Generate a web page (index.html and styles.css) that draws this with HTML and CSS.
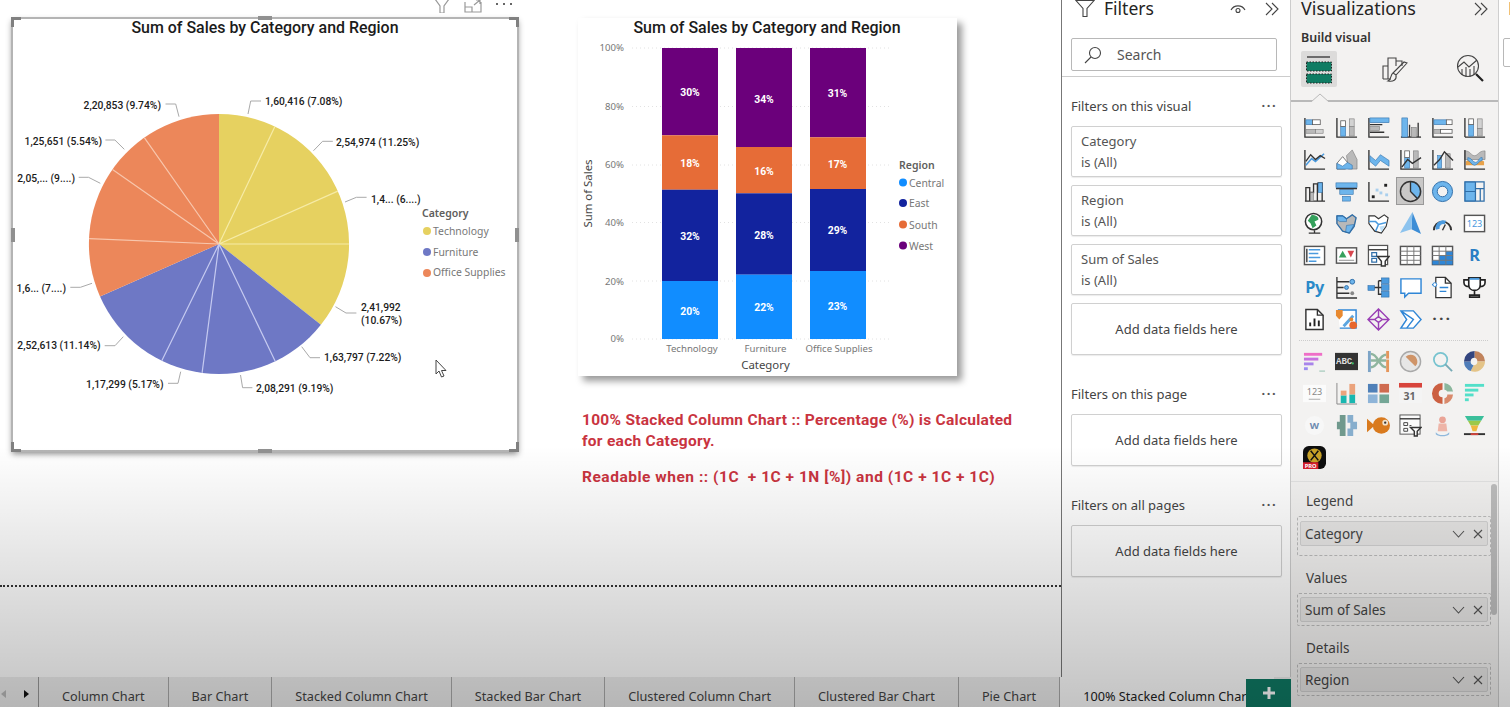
FILE: index.html
```html
<!DOCTYPE html>
<html lang="en">
<head>
  <meta charset="UTF-8" />
  <title>100% Stacked Column Chart</title>
  <link rel="stylesheet" href="styles.css">
</head>
<body>

<div class="report">
  <div class="workspace">
    <main class="canvas">
      <div class="page">
        <section class="visual visual-pie">
          <div class="visual-tools">
            <svg width="18" height="14" viewBox="0 0 18 14"><path class="tool" d="M2 0h14l-5 7v7H7V7z"/></svg>
            <svg width="18" height="14" viewBox="0 0 18 14"><path class="tool" d="M1 3v10h16V3M1 8h7v5M10 6l6-5M12 1h4v4"/></svg>
            <svg width="18" height="14" viewBox="0 0 18 14"><path fill="#666" d="M1 4h2v2H1zM8 4h2v2H8zM15 4h2v2h-2z"/></svg>
          </div>
          <span class="handle corner tl"></span><span class="handle corner tr"></span>
          <span class="handle corner bl"></span><span class="handle corner br"></span>
          <span class="handle mid top"></span><span class="handle mid bottom"></span>
          <span class="handle mid left"></span><span class="handle mid right"></span>

          <svg class="chart" width="506" height="433" viewBox="12 18 506 433">
            <text class="chart-title" x="265" y="33" text-anchor="middle">Sum of Sales by Category and Region</text>

            <path fill="#e6d160" d="M219 244L219 114A130 130 0 0 1 320.9 324.8Z"/>
            <path fill="#6e78c5" d="M219 244L320.9 324.8A130 130 0 0 1 100 296.5Z"/>
            <path fill="#ec875a" d="M219 244L100 296.5A130 130 0 0 1 219 114Z"/>
            <g stroke="#f6eba6" stroke-width="1.2">
              <path d="M219 244L274.9 126.6M219 244L337.8 191.1M219 244H349"/>
            </g>
            <g stroke="#c5caf0" stroke-width="1.2">
              <path d="M219 244L275.2 361.2M219 244L202.1 372.9M219 244L161.8 360.7"/>
            </g>
            <g stroke="#f8c6ac" stroke-width="1.2">
              <path d="M219 244L89.1 238.6M219 244L112.5 169.4M219 244L144.3 137.6"/>
            </g>

            <g class="leader">
              <path d="M248 114L250.7 101H261"/>
              <path d="M313.5 150.7L322.6 141.3H332.8"/>
              <path d="M345 202L356.4 197.3H366.6"/>
              <path d="M335.5 306.7L346 313H356.4"/>
              <path d="M301.7 346.7L310 357.7H320"/>
              <path d="M240.5 375L242.6 387.7H252.4"/>
              <path d="M180.7 371.7L178 383.3H168"/>
              <path d="M123.3 336.7L115 345.7H104.7"/>
              <path d="M92 283.3L80.4 287.3H70.3"/>
              <path d="M100.3 183.3L88.5 177.3H78.7"/>
              <path d="M124.3 149.3L114.9 140H105.4"/>
              <path d="M179 116.7L175.7 104H165.5"/>
            </g>

            <g class="pie-label">
              <text x="265" y="105">1,60,416 (7.08%)</text>
              <text x="336" y="146">2,54,974 (11.25%)</text>
              <text x="371" y="203">1,4... (6....)</text>
              <text x="361" y="311">2,41,992</text>
              <text x="361" y="324">(10.67%)</text>
              <text x="324" y="361">1,63,797 (7.22%)</text>
              <text x="256" y="392">2,08,291 (9.19%)</text>
              <text x="163.5" y="388" text-anchor="end">1,17,299 (5.17%)</text>
              <text x="100.6" y="349" text-anchor="end">2,52,613 (11.14%)</text>
              <text x="66" y="292" text-anchor="end">1,6... (7....)</text>
              <text x="75" y="182" text-anchor="end">2,05,... (9....)</text>
              <text x="102" y="145" text-anchor="end">1,25,651 (5.54%)</text>
              <text x="161" y="109" text-anchor="end">2,20,853 (9.74%)</text>
            </g>

            <text class="legend-title" x="422" y="217">Category</text>
            <circle cx="427" cy="231" r="4" fill="#e6d160"/>
            <circle cx="427" cy="252" r="4" fill="#6e78c5"/>
            <circle cx="427" cy="273" r="4" fill="#ec875a"/>
            <g class="legend-text">
              <text x="433" y="235">Technology</text>
              <text x="433" y="256">Furniture</text>
              <text x="433" y="276">Office Supplies</text>
            </g>

            <path class="cursor" d="M436 360V374L439 371L441.5 377L444 376L441.5 370.500H446Z"/>
          </svg>
        </section>

        <div class="side">
          <section class="visual visual-stack">
            <svg class="chart" width="379" height="358" viewBox="578 18 379 358">
              <text class="chart-title" x="767" y="33" text-anchor="middle">Sum of Sales by Category and Region</text>

              <g class="grid-line">
                <path d="M632 48H890M632 106.500H890M632 165H890M632 222.500H890M632 281H892M632 339H890"/>
              </g>
              <g class="axis-text" text-anchor="end">
                <text x="624" y="51">100%</text>
                <text x="624" y="110">80%</text>
                <text x="624" y="168">60%</text>
                <text x="624" y="226">40%</text>
                <text x="624" y="285">20%</text>
                <text x="624" y="342">0%</text>
              </g>
              <text class="axis-title" transform="translate(592 193.500) rotate(-90)" text-anchor="middle">Sum of Sales</text>

              <rect fill="#6b007b" x="662" y="48" width="56" height="87.300"/>
              <rect fill="#e66c37" x="662" y="135.300" width="56" height="54.400"/>
              <rect fill="#12239e" x="662" y="189.700" width="56" height="91.300"/>
              <rect fill="#118dff" x="662" y="281" width="56" height="58"/>

              <rect fill="#6b007b" x="736" y="48" width="56" height="99"/>
              <rect fill="#e66c37" x="736" y="147" width="56" height="46.300"/>
              <rect fill="#12239e" x="736" y="193.300" width="56" height="81.400"/>
              <rect fill="#118dff" x="736" y="274.700" width="56" height="64.300"/>

              <rect fill="#6b007b" x="810" y="48" width="56" height="89.300"/>
              <rect fill="#e66c37" x="810" y="137.300" width="56" height="51.700"/>
              <rect fill="#12239e" x="810" y="189" width="56" height="82"/>
              <rect fill="#118dff" x="810" y="271" width="56" height="68"/>

              <g class="bar-text" text-anchor="middle">
                <text x="690" y="96">30%</text>
                <text x="690" y="167">18%</text>
                <text x="690" y="240">32%</text>
                <text x="690" y="315">20%</text>
                <text x="764" y="103">34%</text>
                <text x="764" y="175">16%</text>
                <text x="764" y="239">28%</text>
                <text x="764" y="311">22%</text>
                <text x="837.500" y="97">31%</text>
                <text x="837.500" y="168">17%</text>
                <text x="837.500" y="234">29%</text>
                <text x="837.500" y="310">23%</text>
              </g>

              <g class="axis-text" text-anchor="middle">
                <text x="692" y="352">Technology</text>
                <text x="765.500" y="352">Furniture</text>
                <text x="839" y="352">Office Supplies</text>
              </g>
              <text class="axis-title" x="765.500" y="369" text-anchor="middle">Category</text>

              <text class="legend-title" x="899" y="169">Region</text>
              <circle cx="903" cy="182.500" r="4" fill="#118dff"/>
              <circle cx="903" cy="203" r="4" fill="#12239e"/>
              <circle cx="903" cy="224.500" r="4" fill="#e66c37"/>
              <circle cx="903" cy="245.500" r="4" fill="#6b007b"/>
              <g class="legend-text">
                <text x="909" y="186.500">Central</text>
                <text x="909" y="207">East</text>
                <text x="909" y="228.500">South</text>
                <text x="909" y="250">West</text>
              </g>
            </svg>
          </section>

          <p class="note">100% Stacked Column Chart :: Percentage (%) is Calculated<br>for each Category.</p>
          <p class="note note-second">Readable when :: (1C &nbsp;+ 1C + 1N [%]) and (1C + 1C + 1C)</p>
        </div>
      </div>
    </main>

    <aside class="filters">
      <div class="panel-head">
        <svg width="20" height="17" viewBox="0 0 20 17"><path class="thin" d="M1 0.500H19L12 8.500V16.500H8V8.500Z"/></svg>
        <h2>Filters</h2>
        <svg class="eye" width="16" height="12" viewBox="0 0 16 12"><path class="thin" d="M1 7C4 1.500 12 1.500 15 7M3.500 9.500"/><circle class="thin" cx="8" cy="7.500" r="2"/></svg>
        <svg width="14" height="14" viewBox="0 0 14 14"><path class="thin" d="M1 1L7 7L1 13M7 1L13 7L7 13"/></svg>
      </div>
      <div class="search-wrap">
        <div class="search">
          <svg width="18" height="18" viewBox="0 0 18 18"><circle class="thin" cx="11" cy="7" r="5.500"/><path class="thin" d="M7 11L1 17"/></svg>
          <span>Search</span>
        </div>
      </div>

      <div class="filter-label first"><span>Filters on this visual</span><b>&middot;&middot;&middot;</b></div>
      <div class="filter-card">Category<br>is (All)</div>
      <div class="filter-card">Region<br>is (All)</div>
      <div class="filter-card">Sum of Sales<br>is (All)</div>
      <div class="filter-card add">Add data fields here</div>

      <div class="filter-label"><span>Filters on this page</span><b>&middot;&middot;&middot;</b></div>
      <div class="filter-card add">Add data fields here</div>

      <div class="filter-label"><span>Filters on all pages</span><b>&middot;&middot;&middot;</b></div>
      <div class="filter-card add">Add data fields here</div>
    </aside>
  </div>

  <nav class="tabs">
    <div class="tab-arrows">
      <svg width="6" height="8" viewBox="0 0 6 8"><path fill="#bbb" d="M6 0V8L1 4Z"/></svg>
      <svg width="6" height="8" viewBox="0 0 6 8"><path fill="#111" d="M0 0V8L5 4Z"/></svg>
    </div>
    <a class="tab">Column Chart</a>
    <a class="tab">Bar Chart</a>
    <a class="tab">Stacked Column Chart</a>
    <a class="tab">Stacked Bar Chart</a>
    <a class="tab">Clustered Column Chart</a>
    <a class="tab">Clustered Bar Chart</a>
    <a class="tab">Pie Chart</a>
    <a class="tab active">100% Stacked Column Chart</a>
    <a class="tab-add">
      <svg width="12" height="12" viewBox="0 0 12 12"><path fill="#fff" d="M4.500 0H7.500V4.500H12V7.500H7.500V12H4.500V7.500H0V4.500H4.500Z"/></svg>
    </a>
  </nav>
</div>

<aside class="viz">
  <div class="panel-head">
    <h2>Visualizations</h2>
    <svg width="14" height="14" viewBox="0 0 14 14"><path class="thin" d="M1 1L7 7L1 13M7 1L13 7L7 13"/></svg>
  </div>
  <div class="build-title">Build visual</div>
  <div class="build-tabs">
    <div class="build-tab selected">
      <svg width="30" height="30" viewBox="0 0 30 30">
        <path stroke="#222" stroke-width="1.2" d="M3 3H26"/>
        <rect x="2.500" y="8" width="25" height="9" fill="#107c63" stroke="#222" stroke-dasharray="1.500 1.500"/>
        <rect x="2.500" y="20" width="25" height="9" fill="#107c63" stroke="#222" stroke-dasharray="1.500 1.500"/>
      </svg>
    </div>
    <div class="build-tab">
      <svg width="28" height="30" viewBox="0 0 28 30">
        <path class="thin" d="M2 25V12H7V25M7 16V4H15V12M15 7H21V12M2 25H10"/>
        <path class="thin" d="M26 9L15 21L12 19L23 8ZM12 19C9 21 11 25 7 27C12 28 16 26 15 21"/>
      </svg>
    </div>
    <div class="build-tab">
      <svg width="30" height="30" viewBox="0 0 30 30">
        <circle class="thin" cx="13" cy="12" r="10.500"/>
        <path class="thin" d="M3 13L9 8L14 13L22 6M7 21V15M11 23V13M15 23V15M19 21V12"/>
        <path stroke="#222" stroke-width="2.200" d="M21 20L28 27"/>
      </svg>
    </div>
  </div>

  <div class="build-divider"><svg width="20" height="9" viewBox="0 0 20 9"><path fill="#f3f2f1" stroke="#b9b9b9" d="M1 9L10 1L19 9"/></svg></div>

  <div class="viz-grid">
    <svg viewBox="0 0 24 24"><path class="k" d="M2 2V22H23"/><rect class="b" x="3" y="4" width="7" height="5"/><rect class="w" x="10" y="4" width="8" height="5"/><rect class="g" x="3" y="14" width="10" height="4"/><rect class="g2" x="13" y="14" width="8" height="4"/></svg>
    <svg viewBox="0 0 24 24"><path class="k" d="M2 2V22H23"/><rect class="b" x="6" y="11" width="5" height="10"/><rect class="w" x="6" y="5" width="5" height="6"/><rect class="g" x="15" y="11" width="5" height="10"/><rect class="g2" x="15" y="3" width="5" height="8"/></svg>
    <svg viewBox="0 0 24 24"><path class="k" d="M2 2V22H23"/><rect class="b" x="3" y="2" width="20" height="5"/><rect class="g" x="3" y="11" width="10" height="4"/><path class="k" d="M3 9H16M3 17H18"/></svg>
    <svg viewBox="0 0 24 24"><path class="k" d="M2 22H23"/><rect class="b" x="3" y="2" width="6" height="20"/><rect class="g" x="13" y="12" width="5" height="10"/><path class="k" d="M11 9V22M20 7V22"/></svg>
    <svg viewBox="0 0 24 24"><path class="k" d="M2 2V22H23"/><rect class="b" x="3" y="4" width="13" height="5"/><rect class="w" x="16" y="4" width="6" height="5"/><rect class="g" x="3" y="14" width="7" height="4"/><rect class="w" x="10" y="14" width="12" height="4"/></svg>
    <svg viewBox="0 0 24 24"><path class="k" d="M2 22H23M2 2V22"/><rect class="b" x="6" y="9" width="5" height="12"/><rect class="w" x="6" y="3" width="5" height="6"/><rect class="g" x="15" y="13" width="5" height="8"/><rect class="g2" x="15" y="3" width="5" height="10"/></svg>

    <svg viewBox="0 0 24 24"><path class="k" d="M2 2V22H23"/><path class="bs" d="M3 18L9 11L13 14L22 6"/><path class="k" d="M3 14L8 7L13 12L18 8L23 11"/></svg>
    <svg viewBox="0 0 24 24"><path class="g" d="M12 8L18 2L23 12V22H14Z"/><path class="w" d="M8 9L13 15L11 22H2V16Z"/><path class="b" d="M2 22V16L8 19L13 15L18 18V22Z"/></svg>
    <svg viewBox="0 0 24 24"><path class="k" d="M2 2V22H23"/><path class="b" d="M3 8L9 13L14 7L23 13V19L14 13L9 19L3 14Z"/></svg>
    <svg viewBox="0 0 24 24"><path class="k" d="M2 2V22H23"/><rect class="b" x="6" y="10" width="5" height="11"/><rect class="w" x="6" y="3" width="5" height="7"/><rect class="g" x="15" y="3" width="5" height="18"/><path class="k" d="M3 20L9 12L14 16L23 10"/></svg>
    <svg viewBox="0 0 24 24"><path class="k" d="M2 2V22H23"/><rect class="b" x="7" y="8" width="4" height="13"/><rect class="g" x="15" y="6" width="5" height="15"/><path class="k" d="M3 18L9 12L14 4L23 13"/></svg>
    <svg viewBox="0 0 24 24"><path class="g" d="M2 3C8 3 8 8 12 8S16 3 23 3V12H2Z"/><path class="or" d="M3 14C8 10 10 17 13 17S17 11 22 14V18H3Z"/><path class="b" d="M5 10C9 10 10 15 13 15S17 9 20 10V13C17 13 15 18 12 18S7 13 5 13Z"/><path class="k" d="M2 2V22H23"/></svg>

    <svg viewBox="0 0 24 24"><path class="k" d="M2 22H23M3 22V8H7V22M7 13H11V4H15V22M15 3H20V22"/><rect class="b" x="16" y="3" width="4" height="10"/><rect class="g" x="8" y="13" width="3" height="9"/></svg>
    <svg viewBox="0 0 24 24"><rect class="b" x="1" y="3" width="22" height="5"/><rect class="b" x="5" y="10" width="14" height="5"/><rect class="b" x="8" y="17" width="8" height="5"/><path class="k" d="M1 9H23"/></svg>
    <svg viewBox="0 0 24 24"><path class="k" d="M2 2V22H23"/><rect x="18" y="4" width="3" height="3" fill="#222"/><rect class="b2" x="9" y="9" width="3" height="3"/><rect class="b2" x="13" y="12" width="3" height="3"/><rect class="b2" x="19" y="14" width="3" height="3"/><rect x="5" y="16" width="3" height="3" fill="#222"/></svg>
    <div class="viz-selected"><svg viewBox="0 0 24 24"><path class="b" d="M12 1.500A10.500 10.500 0 0 1 19 20L12 12Z"/><circle class="ring" cx="12" cy="12" r="10.500"/><path class="k" d="M12 1.500V12L19.500 19.500"/></svg></div>
    <svg viewBox="0 0 24 24"><circle cx="12" cy="12" r="8" fill="none" stroke="#6db5ec" stroke-width="5"/><circle cx="12" cy="12" r="10.500" class="ring2"/><circle cx="12" cy="12" r="5.500" class="ring2"/></svg>
    <svg viewBox="0 0 24 24"><rect class="b" x="2" y="2" width="11" height="20"/><path class="kb" d="M2 2H22V22H2ZM13 2V22M2 12H13M13 9H22M18 9V22"/></svg>

    <svg viewBox="0 0 24 24"><circle cx="11" cy="10" r="8.500" fill="#fff" stroke="#333" stroke-width="1.600"/><path d="M9 3C13 3 17 5 16 8L12 10L14 14L10 17L8 12L5 9Z" fill="#35a05c"/><path class="k" d="M6 22H18M12 19V22"/></svg>
    <svg viewBox="0 0 24 24"><path class="g" d="M2 4H8L12 7L18 3L22 6L20 15L15 22L8 20L2 12Z"/><path class="b" d="M2 4H8L12 7V10H5L2 8ZM12 14L20 13L15 22L11 21Z"/><path class="kb" d="M2 4H8L12 7L18 3L22 6L20 15L15 22L8 20L2 12Z"/></svg>
    <svg viewBox="0 0 24 24"><path fill="#fff" stroke="#333" stroke-width="1.200" d="M2 4H8L12 7L18 3L22 6L20 15L15 22L8 20L2 12Z"/><path class="bs" d="M2 10H9L12 13L20 11M9 20L12 13"/><path fill="#bfe0f7" d="M13 15L19 14L15 21Z"/></svg>
    <svg viewBox="0 0 24 24"><path fill="#3c8dd6" d="M14 0L23 23L13 18Z"/><path fill="#8cc3ee" d="M14 0L13 18L1 22Z"/></svg>
    <svg viewBox="0 0 24 24"><path fill="none" stroke="#333" stroke-width="2" d="M3 19A9 9 0 0 1 21 19"/><path fill="none" stroke="#4a9ade" stroke-width="4" d="M7 18A6 6 0 0 1 15 11"/><path class="k" d="M12 19L15 13"/></svg>
    <svg viewBox="0 0 24 24"><rect x="1.500" y="3.500" width="21" height="17" fill="#fff" stroke="#555" stroke-width="1.500"/><text class="icon-card" x="12" y="16" text-anchor="middle">123</text></svg>

    <svg viewBox="0 0 24 24"><rect x="1.500" y="2.500" width="21" height="19" fill="#fff" stroke="#555" stroke-width="1.500"/><path d="M6 6H18M6 10H16M6 14H18M6 18H14" stroke="#4a9ade" stroke-width="1.600"/><path class="k" d="M4 5V19"/></svg>
    <svg viewBox="0 0 24 24"><rect x="1.500" y="4" width="21" height="16" fill="#fff" stroke="#555" stroke-width="1.500"/><path fill="#36a05c" d="M8 7L12 14H4Z"/><path fill="#d8474f" d="M13 7H20L16.500 14Z"/><path stroke="#8c8c8c" d="M4 17H20"/></svg>
    <svg viewBox="0 0 24 24"><rect x="1.500" y="1.500" width="20" height="20" fill="#fff" stroke="#555" stroke-width="1.300"/><path class="k" d="M1.500 6H21.500"/><path class="kb" d="M5 9H10V13H5ZM5 15H10V19H5Z"/><path fill="#fff" stroke="#333" stroke-width="1.500" d="M11 13H23L19 18V23H15V18Z"/></svg>
    <svg viewBox="0 0 24 24"><rect x="1.500" y="2.500" width="21" height="19" fill="#fff" stroke="#555" stroke-width="1.500"/><path d="M1.500 7.500H22.500M1.500 12H22.500M1.500 17H22.500M8.500 2.500V21.500M15.500 2.500V21.500" stroke="#777"/></svg>
    <svg viewBox="0 0 24 24"><rect x="1.500" y="2.500" width="21" height="19" fill="#fff" stroke="#555" stroke-width="1.500"/><rect x="8.500" y="12" width="14" height="9.500" fill="#2f86d6"/><rect x="1.500" y="17" width="7" height="4.500" fill="#2f86d6"/><rect x="15.500" y="7.500" width="7" height="4.500" fill="#2f86d6"/><path d="M1.500 7.500H22.500M1.500 12H22.500M1.500 17H22.500M8.500 2.500V21.500M15.500 2.500V21.500" stroke="#777"/></svg>
    <svg viewBox="0 0 24 24"><text class="icon-r" x="12" y="18" text-anchor="middle">R</text></svg>

    <svg viewBox="0 0 24 24"><text class="icon-py" x="12" y="18" text-anchor="middle">Py</text></svg>
    <svg viewBox="0 0 24 24"><path class="k" d="M2 1V23H23M2 6H15M2 12H9M2 18H15"/><circle class="node" cx="18" cy="6" r="2.500"/><circle class="node" cx="12" cy="12" r="2"/><circle class="node2" cx="18" cy="18" r="2"/></svg>
    <svg viewBox="0 0 24 24"><rect class="b3" x="1" y="10" width="7" height="5"/><rect class="b3" x="15" y="2" width="8" height="6"/><rect class="b3" x="15" y="9" width="8" height="6"/><rect class="b3" x="15" y="16" width="8" height="6"/><path class="k" d="M8 12H15M12 5V19H15M12 5H15"/></svg>
    <svg viewBox="0 0 24 24"><path fill="#fff" stroke="#2f86d6" stroke-width="1.500" d="M2 3H23V18H10L6 22V18H2Z"/></svg>
    <svg viewBox="0 0 24 24"><path fill="#fff" stroke="#333" stroke-width="1.300" d="M5 1.500H15L21 7.500V22.500H5Z"/><path class="k" d="M15 1.500V7.500H21"/><path stroke="#2f86d6" stroke-width="1.400" d="M9 12H18M1 9H6M9 16H16"/><circle cx="4" cy="9" r="2" fill="#fff" stroke="#2f86d6"/></svg>
    <svg viewBox="0 0 24 24"><path fill="#fff" stroke="#222" stroke-width="1.700" d="M6 2H18V9C18 13 15 15 12 15S6 13 6 9ZM6 4H1V7C1 10 4 11 6 11M18 4H23V7C23 10 20 11 18 11M12 15V19M7 22H17V20H7Z"/><path fill="#4a9ade" d="M7 2H17V4H7Z"/></svg>

    <svg viewBox="0 0 24 24"><path fill="#fff" stroke="#333" stroke-width="1.500" d="M3 1.500H15L21 7.500V22.500H3Z"/><path class="k" d="M15 1.500V7.500H21"/><path stroke="#222" stroke-width="2" d="M7.500 19V15M12 19V11M16.500 19V13"/></svg>
    <svg viewBox="0 0 24 24"><path fill="#fff" stroke="#2f86d6" stroke-width="1.500" d="M3 2H22V21H5"/><path stroke="#5ba5e0" stroke-width="3" d="M9 19L19 8"/><path fill="#e8892f" d="M1 2H8V8L4.500 12L1 8Z"/><circle cx="19" cy="18" r="4" fill="#e8662c"/><circle cx="17" cy="12" r="2" fill="#e8892f"/></svg>
    <svg viewBox="0 0 24 24"><path fill="none" stroke="#9a3fb5" stroke-width="1.500" d="M12 1L23 12L12 23L1 12ZM12 1V9L8 12L12 15V23M12 9L16 12L12 15M1 12H8M16 12H23"/></svg>
    <svg viewBox="0 0 24 24"><path fill="#fff" stroke="#2f86d6" stroke-width="1.500" d="M2 3H15L23 12L15 21H2L8 12ZM2 3L15 12L8 21"/></svg>
    <div class="viz-more">&middot;&middot;&middot;</div>
  </div>

  <div class="viz-sep"></div>

  <div class="viz-grid custom">
    <svg viewBox="0 0 24 24"><path d="M1 3H20V6H1Z" fill="#ef6fc7"/><path d="M1 8H16V11H1Z" fill="#c772e0"/><path d="M1 13H11V16H1Z" fill="#a884ea"/><path d="M1 18H5V21H1Z" fill="#9c8cf0"/><path d="M17 22H23" stroke="#8fbfae"/></svg>
    <svg viewBox="0 0 24 24"><rect y="3" width="24" height="18" fill="#333"/><text class="icon-abc" x="1" y="15">ABC</text><circle cx="18.500" cy="14" r="1.200" fill="#36c06c"/></svg>
    <svg viewBox="0 0 24 24"><rect x="1" y="1" width="3" height="22" fill="#7da4c7"/><rect x="20" y="1" width="3" height="8" fill="#e5965c"/><rect x="20" y="10" width="3" height="13" fill="#e5965c"/><path d="M4 4C12 4 12 18 20 18M4 18C12 18 12 5 20 5M4 11H20" fill="none" stroke="#8fb59e" stroke-width="2.500"/></svg>
    <svg viewBox="0 0 24 24"><circle cx="12" cy="12" r="10.500" fill="#e6e6e6" stroke="#a9a9a9" stroke-width="1.500"/><path d="M12 5A7 7 0 0 1 17 17L7 7A7 7 0 0 1 12 5Z" fill="#cf9468"/></svg>
    <svg viewBox="0 0 24 24"><circle cx="10" cy="10" r="7" fill="none" stroke="#77c3cf" stroke-width="1.800"/><path d="M15 15L22 22" stroke="#77aab5" stroke-width="2"/></svg>
    <svg viewBox="0 0 24 24"><path d="M12 1A11 11 0 0 1 23 12H15A4 4 0 0 0 12 8Z" fill="#c1835c"/><path d="M23 12A11 11 0 0 1 8 22L11 16A4 4 0 0 0 15 12Z" fill="#e4c488"/><path d="M8 22A11 11 0 0 1 1 12H8A4 4 0 0 0 11 16Z" fill="#4f7db9"/><path d="M1 12A11 11 0 0 1 12 1V8A4 4 0 0 0 8 12Z" fill="#33457f"/></svg>

    <svg viewBox="0 0 24 24"><rect y="3" width="24" height="18" fill="#fbfbfb"/><text class="icon-soft" x="12" y="14" text-anchor="middle">123</text><path d="M6 18H18" stroke="#aaa"/></svg>
    <svg viewBox="0 0 24 24"><path d="M2 1V23H23" fill="none" stroke="#888"/><rect x="6" y="14" width="6" height="8" fill="#19b7b0"/><rect x="6" y="9" width="6" height="5" fill="#eba37c"/><rect x="15" y="13" width="6" height="9" fill="#19b7b0"/><rect x="15" y="2" width="6" height="11" fill="#eba37c"/></svg>
    <svg viewBox="0 0 24 24"><rect x="1" y="2" width="10" height="9" fill="#4f80b8"/><rect x="13" y="2" width="10" height="9" fill="#cf6b50"/><rect x="1" y="13" width="10" height="9" fill="#8eb4d8"/><rect x="13" y="13" width="10" height="9" fill="#74a696"/></svg>
    <svg viewBox="0 0 24 24"><rect y="1" width="24" height="5" fill="#d8443c"/><rect y="6" width="24" height="16" fill="#f4f4f4"/><text class="icon-cal" x="11" y="19" text-anchor="middle">31</text></svg>
    <svg viewBox="0 0 24 24"><path d="M12 1A11 11 0 0 0 12 23V16A4 4 0 0 1 12 8Z" fill="#cc6042"/><path d="M14 1A11 11 0 0 1 23 10H17A4 4 0 0 0 14 8Z" fill="#8bb79d"/><path d="M23 13A11 11 0 0 1 14 23V17A4 4 0 0 0 17 13Z" fill="#d98a6c"/></svg>
    <svg viewBox="0 0 24 24"><rect x="2" y="2" width="20" height="3" fill="#53dfc9"/><rect x="2" y="7" width="14" height="3" fill="#53dfc9"/><rect x="2" y="12" width="9" height="3" fill="#53dfc9"/><rect x="2" y="17" width="4" height="3" fill="#53dfc9"/></svg>

    <svg viewBox="0 0 24 24"><circle cx="12" cy="12" r="10" fill="#f7f7f7"/><text class="icon-w" x="12" y="16" text-anchor="middle">W</text></svg>
    <svg viewBox="0 0 24 24"><path d="M5 1H11V23H5V16H2V8H5Z" fill="#70998d"/><path d="M13 1H19V8H23V16H19V23H13V15H16V9H13Z" fill="#87aecd"/></svg>
    <svg viewBox="0 0 24 24"><ellipse cx="15" cy="12" rx="9" ry="8.500" fill="#d97a1e"/><path d="M8 12L0 5V19Z" fill="#d97a1e"/><circle cx="19" cy="9" r="3" fill="#f2e2cc"/><circle cx="19" cy="9" r="1.200" fill="#333"/></svg>
    <svg viewBox="0 0 24 24"><rect x="1" y="1" width="21" height="20" fill="#fafafa" stroke="#555"/><path class="k" d="M1 5H22"/><path d="M5 9H9V12H5ZM5 15H9V18H5ZM11 12H13" fill="none" stroke="#444"/><path fill="#fff" stroke="#333" stroke-width="1.500" d="M12 14H23L19 18V23H16V18Z"/></svg>
    <svg viewBox="0 0 24 24"><circle cx="12" cy="6" r="3.500" fill="#eaa497"/><path d="M8 10H16L17 18H7Z" fill="#eeb5a8"/><path d="M5 19C8 23 16 23 19 19V21C16 24 8 24 5 21Z" fill="#8fb8dc"/></svg>
    <svg viewBox="0 0 24 24"><path d="M2 2H22L19 7H5Z" fill="#3bbf9b"/><path d="M5 7H19L16 12H8Z" fill="#9cc94a"/><path d="M8 12H16L14 18H10Z" fill="#efb73e"/><path d="M1 21H23" stroke="#333" stroke-width="2"/><path d="M8 21H16" stroke="#d1443c" stroke-width="2"/></svg>

    <svg viewBox="0 0 24 24"><rect width="24" height="24" rx="6" fill="#0e0e0e"/><circle cx="12" cy="10" r="7.500" fill="#c9a227"/><path d="M8 5L16 15M16 5L8 15" stroke="#111" stroke-width="1.600"/><rect x="0" y="17" width="16" height="7" fill="#d81e2c"/><text class="icon-pro" x="8" y="23" text-anchor="middle">PRO</text></svg>
  </div>

  <div class="wells">
    <div class="well-label">Legend</div>
    <div class="well tall">
      <div class="chip"><span>Category</span>
        <svg width="13" height="8" viewBox="0 0 13 8"><path class="thin" d="M1 1L6.500 7L12 1"/></svg>
        <svg width="10" height="10" viewBox="0 0 10 10"><path class="thin" d="M1 1L9 9M9 1L1 9"/></svg>
      </div>
    </div>
    <div class="well-label">Values</div>
    <div class="well">
      <div class="chip"><span>Sum of Sales</span>
        <svg width="13" height="8" viewBox="0 0 13 8"><path class="thin" d="M1 1L6.500 7L12 1"/></svg>
        <svg width="10" height="10" viewBox="0 0 10 10"><path class="thin" d="M1 1L9 9M9 1L1 9"/></svg>
      </div>
    </div>
    <div class="well-label">Details</div>
    <div class="well">
      <div class="chip"><span>Region</span>
        <svg width="13" height="8" viewBox="0 0 13 8"><path class="thin" d="M1 1L6.500 7L12 1"/></svg>
        <svg width="10" height="10" viewBox="0 0 10 10"><path class="thin" d="M1 1L9 9M9 1L1 9"/></svg>
      </div>
    </div>
  </div>
  <div class="scrollbar"></div>
</aside>

<aside class="fields">
  <h2>Fields</h2>
  <div class="fields-search"></div>
</aside>

<div class="vignette"></div>

</body>
</html>
```

FILE: styles.css
```css
* { box-sizing: border-box; }
html, body { margin: 0; height: 100%; }
body {
  display: flex; width: 1510px; height: 707px; overflow: hidden;
  position: relative; background: #fff; color: #333;
  font-family: "Noto Sans", sans-serif; font-size: 13px;
}
h2 { margin: 0; font-size: 18px; font-weight: 400; line-height: 17px; color: #252423; }

/* darkening at the bottom of the video frame */
.vignette {
  position: absolute; inset: 0; pointer-events: none;
  background: linear-gradient(to bottom, rgba(0,0,0,0) 63%, rgba(0,0,0,.235) 100%);
}

.report { width: 1291px; display: flex; flex-direction: column; }
.workspace { flex: 1; display: flex; min-height: 0; }

/* canvas */
.canvas { width: 1062px; border-right: 1px solid #777; }
.page {
  height: 587px; border-bottom: 2px dotted #333;
  display: flex; gap: 60px; padding: 18px 0 0 12px;
}
.visual { position: relative; background: #fff; }
.visual-pie {
  width: 506px; height: 433px; outline: 2px solid #b4b4b4; outline-offset: -1px;
  box-shadow: 0 3px 6px rgba(0,0,0,.45);
}
.visual-stack { width: 379px; height: 358px; box-shadow: 5px 5px 7px rgba(0,0,0,.4); }
.chart { display: block; }
.side { width: 470px; }

.chart-title { font: 500 15.95px Roboto, sans-serif; fill: #1b1b1b; }
.pie-label { font: 500 10.3px Roboto, sans-serif; fill: #1c1c1c; }
.leader path { fill: none; stroke: #a9a9a9; stroke-width: 1; }
.legend-title { font: 600 10.5px "Noto Sans", sans-serif; fill: #605e5c; }
.legend-text { font: 400 10.4px "Noto Sans", sans-serif; fill: #777; }
.axis-text { font: 400 9.6px "Noto Sans", sans-serif; fill: #777; }
.axis-title { font: 400 11.4px "Noto Sans", sans-serif; fill: #444; }
.bar-text { font: 700 10.4px Roboto, sans-serif; fill: #fff; }
.grid-line path { fill: none; stroke: #e2e2e2; stroke-dasharray: 1 3; }
.cursor { fill: #fff; stroke: #444; stroke-width: 1; }

.visual-tools {
  position: absolute; top: -19px; right: 5px; height: 15px;
  display: flex; gap: 13px; align-items: flex-start;
}
.tool { fill: none; stroke: #999; stroke-width: 1.2; }

.handle { position: absolute; z-index: 1; }
.corner { width: 10px; height: 10px; border: 0 solid #808080; }
.tl { left: -1px; top: -1px; border-width: 3px 0 0 3px; }
.tr { right: -1px; top: -1px; border-width: 3px 3px 0 0; }
.bl { left: -1px; bottom: -1px; border-width: 0 0 3px 3px; }
.br { right: -1px; bottom: -1px; border-width: 0 3px 3px 0; }
.mid { background: #909090; }
.top, .bottom { width: 14px; height: 4px; left: 246px; }
.top { top: -2px; }
.bottom { bottom: -2px; }
.left, .right { width: 4px; height: 14px; top: 210px; }
.left { left: -1px; }
.right { right: -1px; }

.note {
  margin: 34px 0 0 4px; white-space: nowrap; letter-spacing: .28px;
  font: 700 15.5px/21px Roboto, sans-serif; color: #c9343f;
}
.note-second { margin-top: 15px; letter-spacing: .52px; }

/* panels shared */
.panel-head { height: 17px; display: flex; align-items: center; gap: 9px; }
.panel-head h2 { flex: 1; }
.thin { fill: none; stroke: #444; stroke-width: 1.100; }

/* filters */
.filters { width: 229px; background: #fff; border-right: 1px solid #ccc; }
.filters .panel-head { padding: 0 11px 0 13px; }
.filters h2 { font-size: 17.5px; }
.eye { margin-right: 10px; }
.search-wrap { height: 60px; padding: 21px 13px 0 9px; border-bottom: 1px solid #ccc; }
.search {
  height: 33px; border: 1px solid #b8b8b8; border-radius: 2px;
  display: flex; align-items: center; gap: 15px; padding-left: 12px;
  font-size: 14px; color: #555;
}
.filter-label {
  display: flex; justify-content: space-between; align-items: center;
  height: 18px; margin: 30px 13px 11px 9px; color: #444; font-size: 13px;
}
.filter-label.first { margin-top: 20px; }
.filter-label b { font: 700 14px Roboto, sans-serif; letter-spacing: 1px; color: #555; }
.filter-card {
  height: 51px; margin: 0 8px 8px 9px; padding: 4px 9px 0; line-height: 20.5px;
  border: 1px solid #d0d0d0; border-radius: 2px; box-shadow: 0 1px 1px rgba(0,0,0,.08);
  font-size: 13px; color: #555;
}
.filter-card.add { height: 52px; line-height: 50px; padding-top: 0; text-align: center; font-size: 13px; color: #444; }

/* page tabs */
.tabs { height: 30px; display: flex; background: #eeeeee; overflow: hidden; position: relative; }
.tab-arrows {
  width: 39px; flex: none; display: flex; align-items: center; justify-content: space-between;
  padding: 4px 8px 0 0; border-right: 1px solid #999;
}
.tab {
  flex: none; padding: 10px 23px 0; border-right: 1px solid #aaa;
  font-size: 12.7px; color: #444; white-space: nowrap;
}
.tab.active { background: #fff; color: #222; border: 0; }
.tab-add {
  position: absolute; right: 0; top: 2px; bottom: 0; width: 45px;
  background: #0f7a64; display: flex; align-items: center; justify-content: center;
}

/* visualizations */
.viz {
  width: 208px; flex: none; position: relative; background: #f3f2f1;
  border-right: 1px solid #cfcfcf;
}
.viz .panel-head { padding: 0 10px 0 10px; }
.build-title { margin: 13px 0 0 10px; height: 16px; line-height: 16px; font-weight: 600; font-size: 12.500px; color: #333; }
.build-tabs { display: flex; justify-content: space-between; margin: 5px 10px 0 10px; height: 36px; }
.build-tab { width: 36px; height: 36px; display: flex; align-items: center; justify-content: center; }
.build-tab.selected { background: #dcdbda; border-radius: 2px; }
.build-divider {
  height: 15px; border-bottom: 2px solid #b9b9b9; padding-left: 19px;
  display: flex; align-items: flex-end;
}
.build-divider svg { margin-bottom: -2px; }

.viz-grid {
  display: grid; grid-template-columns: repeat(6, 32px); grid-auto-rows: 32px;
  justify-items: center; align-items: center;
  margin-top: 9px; padding-left: 7px; height: 224px;
}
.viz-grid svg { width: 23px; height: 23px; display: block; }
.viz-selected {
  width: 28px; height: 28px; background: #c9c8c7; border: 1px solid #999;
  display: flex; align-items: center; justify-content: center;
}
.viz-more { font: 700 17px Roboto, sans-serif; letter-spacing: 1.500px; color: #444; }
.viz-sep { margin: 5px 10px 0 8px; border-top: 1px dotted #ccc; }
.viz-grid.custom { margin-top: 4px; height: 128px; }

.k { fill: none; stroke: #333; stroke-width: 1.400; }
.b { fill: #6db5ec; stroke: #2f6ea8; stroke-width: .6; }
.b2 { fill: #a9cfee; }
.b3 { fill: #4a9ade; stroke: #2f6ea8; stroke-width: .6; }
.bs { fill: none; stroke: #4a9ade; stroke-width: 1.600; }
.kb { fill: none; stroke: #2f6ea8; stroke-width: 1.300; }
.g { fill: #b9b9b9; stroke: #777; stroke-width: .6; }
.g2 { fill: #d2d2d2; stroke: #777; stroke-width: .6; }
.w { fill: #fff; stroke: #555; stroke-width: .8; }
.or { fill: #e8a24a; }
.ring { fill: none; stroke: #333; stroke-width: 1.500; }
.ring2 { fill: none; stroke: #2f6ea8; stroke-width: 1; }
.node { fill: #6db5ec; stroke: #2f6ea8; }
.node2 { fill: #888; }
.icon-card { font: 400 9.500px "Noto Sans", sans-serif; fill: #4a9ade; }
.icon-r { font: 700 17px "Noto Sans", sans-serif; fill: #2a7fc4; }
.icon-py { font: 700 17px "Noto Sans", sans-serif; fill: #2a8ac9; letter-spacing: -.5px; }
.icon-abc { font: 700 9.500px "Liberation Mono", monospace; fill: #ddd; }
.icon-soft { font: 400 9.500px "Noto Sans", sans-serif; fill: #888; }
.icon-cal { font: 700 11px "Noto Sans", sans-serif; fill: #666; }
.icon-w { font: 700 10px "Noto Sans", sans-serif; fill: #6d8ab0; }
.icon-pro { font: 700 6px "Noto Sans", sans-serif; fill: #fff; }

.wells { position: absolute; left: 0; right: 0; top: 481px; border-top: 1px solid #e2e2e2; padding: 0 7px 0 6px; }
.well-label { height: 20px; line-height: 20px; margin: 12px 0 5px 9px; font-size: 13.500px; color: #444; }
.well-label:first-child { margin-top: 9px; }
.well {
  height: 33px; padding: 3px 2px; width: 194px;
  border: 1px dashed #bdbdbd; border-radius: 2px;
}
.well.tall { height: 40px; padding-top: 4px; }
.chip {
  height: 25px; display: flex; align-items: center; gap: 8px; padding: 0 4px 0 4px;
  background: #e8e7e6; border: 1px solid #d3d3d3; border-radius: 2px;
  font-size: 13.500px; color: #444;
}
.chip span { flex: 1; }
.chip .thin { stroke: #555; }
.scrollbar { position: absolute; left: 200px; top: 484px; width: 6px; height: 131px; background: #bdbdbd; border-radius: 3px; }

/* sliver of the next pane */
.fields { flex: 1; background: #fff; overflow: hidden; padding: 0 0 0 9px; white-space: nowrap; }
.fields h2 { height: 17px; }
.fields-search { height: 29px; margin: 21px 0 0 -5px; width: 20px; border: 1px solid #b8b8b8; border-radius: 2px; }
```
